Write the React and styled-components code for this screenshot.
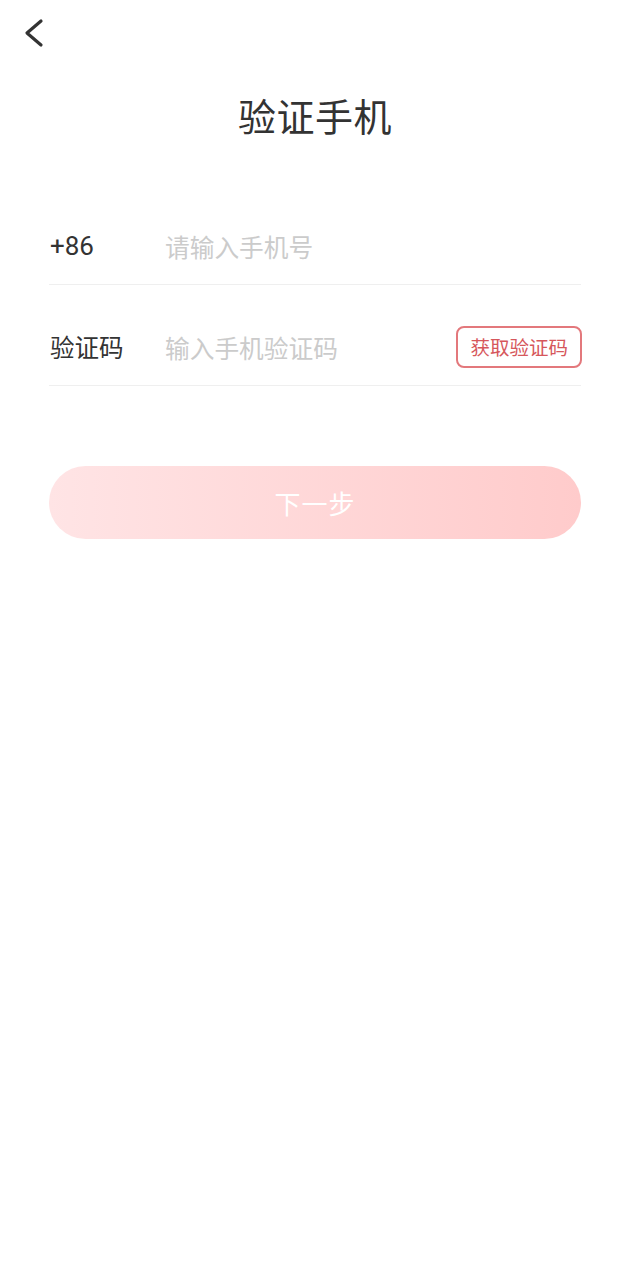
import React from "react";
import styled, { createGlobalStyle } from "styled-components";

const Global = createGlobalStyle`
  html, body { margin: 0; padding: 0; background: #fff; }
  body { font-family: "Noto Sans CJK SC", "Noto Sans", sans-serif; color: #333; }
  * { box-sizing: border-box; }
`;

const Page = styled.div`
  width: 630px;
  min-height: 1280px;
  background: #fff;
  display: flex;
  flex-direction: column;
`;

const TopBar = styled.div`
  height: 65px;
  display: flex;
  align-items: center;
  padding-left: 23px;
`;

const BackButton = styled.button`
  border: 0;
  background: none;
  padding: 0;
  width: 22px;
  height: 30px;
  display: flex;
  align-items: center;
  justify-content: center;
  cursor: pointer;
`;

const Title = styled.h1`
  margin: 25px 0 0;
  height: 50px;
  line-height: 50px;
  text-align: center;
  font-size: 38px;
  font-weight: 400;
  color: #333;
  letter-spacing: 0.5px;
`;

const Form = styled.div`
  margin-top: 44px;
  padding: 0 49px;
  display: flex;
  flex-direction: column;
`;

const Row = styled.div`
  display: flex;
  align-items: center;
  height: 101px;
  padding-top: 41px;
  padding-bottom: 18px;
  border-bottom: 1px solid #efefef;
`;

const Label = styled.span`
  width: 116px;
  flex-shrink: 0;
  font-family: ${(p) => (p.$numeric ? 'Roboto, "Noto Sans", sans-serif' : "inherit")};
  font-size: ${(p) => (p.$numeric ? "26px" : "24.5px")};
  color: #333;
  line-height: 42px;
  padding-left: 1px;
`;

const Field = styled.input`
  flex: 1;
  min-width: 0;
  border: 0;
  outline: none;
  background: transparent;
  font-family: inherit;
  font-size: 24.7px;
  color: #333;
  padding: 0;
  height: 42px;
  &::placeholder { color: #cbcbcb; }
`;

const CodeButton = styled.button`
  flex-shrink: 0;
  height: 42px;
  padding: 0 12px;
  border: 2px solid #e3787c;
  border-radius: 8px;
  background: #fff;
  color: #d6575c;
  font-family: inherit;
  font-size: 19.5px;
  line-height: 1;
  cursor: pointer;
  margin-right: -1px;
  margin-top: 1px;
`;

const NextButton = styled.button`
  margin: 80px 49px 0;
  height: 73px;
  border: 0;
  border-radius: 37px;
  background: linear-gradient(90deg, #ffe4e5 0%, #ffcbcb 100%);
  color: #fff;
  font-family: inherit;
  font-size: 26px;
  letter-spacing: 1px;
  cursor: pointer;
`;

export default function App() {
  return (
    <>
      <Global />
      <Page>
        <TopBar>
          <BackButton aria-label="返回">
            <svg width="22" height="30" viewBox="0 0 22 30">
              <polyline
                points="18,3 4,15 18,27"
                fill="none"
                stroke="#333"
                strokeWidth="3.2"
                strokeLinecap="round"
                strokeLinejoin="round"
              />
            </svg>
          </BackButton>
        </TopBar>
        <Title>验证手机</Title>
        <Form>
          <Row>
            <Label $numeric>+86</Label>
            <Field placeholder="请输入手机号" />
          </Row>
          <Row>
            <Label>验证码</Label>
            <Field placeholder="输入手机验证码" />
            <CodeButton>获取验证码</CodeButton>
          </Row>
        </Form>
        <NextButton>下一步</NextButton>
      </Page>
    </>
  );
}
